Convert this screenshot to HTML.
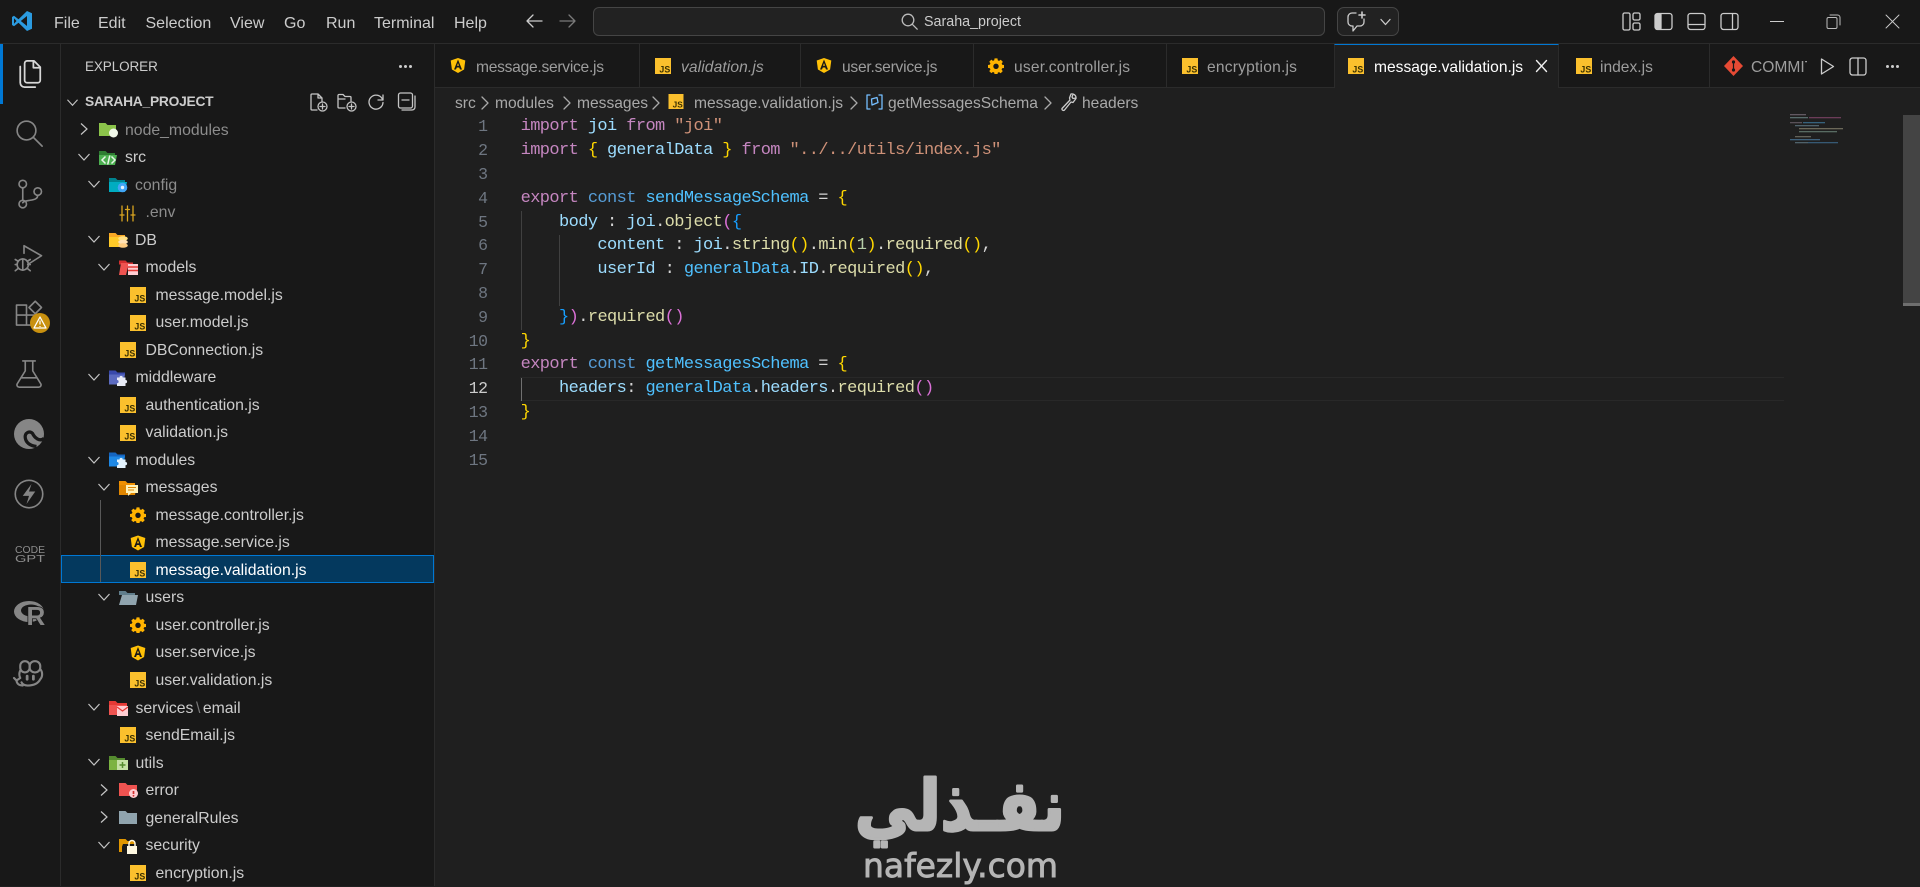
<!DOCTYPE html>
<html lang="en"><head><meta charset="utf-8"><title>Saraha_project</title>
<style>
*{box-sizing:border-box}
html,body{margin:0;padding:0;width:1920px;height:886px;overflow:hidden;background:#1f1f1f;font-family:"Liberation Sans",sans-serif;color:#ccc}
.a{position:absolute}
.t{position:absolute;white-space:pre;line-height:20px}
svg{position:absolute;overflow:visible}
.s{fill:none;stroke:currentColor;stroke-width:1.3;stroke-linecap:round;stroke-linejoin:round}
#title{left:0;top:0;width:1920px;height:44px;background:#181818;border-bottom:1px solid #2b2b2b}
.m{top:13.500px;font-size:16px;color:#ccc}
#act{left:0;top:44px;width:61px;height:842px;background:#181818;border-right:1px solid #2b2b2b}
.ai{color:#868686;left:14px;width:30px;height:30px}
#side{left:61px;top:44px;width:374px;height:842px;background:#181818;border-right:1px solid #2b2b2b}
#tabs{left:435px;top:44px;width:1485px;height:44px;background:#181818;border-bottom:1px solid #2b2b2b}
.sep{top:44px;width:1px;height:43px;background:#2b2b2b}
.tb{top:57.500px;font-size:15.6px;color:#9d9d9d}
.bc{top:93.500px;font-size:15.6px;color:#a9a9a9}
.ch{color:#a9a9a9}
.r{position:absolute;left:0;width:434px;height:27.52px;font-size:15.8px;color:#ccc}
.r span{position:absolute;top:4.6px;line-height:20px;white-space:pre}
.r svg{top:6px}
.r svg[width="12"]{top:7.3px}
.d{color:#8c8c8c}
#code{left:520.6px;top:115.4px;font:17px/23.8px "Liberation Mono",monospace;letter-spacing:-.6px;white-space:pre;color:#d4d4d4}
#nums{left:440px;top:115.4px;width:47.5px;text-align:right;white-space:pre;font:16.5px/23.8px "Liberation Mono",monospace;letter-spacing:-.5px;color:#6e7681}
.k{color:#c586c0}.v{color:#9cdcfe}.st{color:#ce9178}.c{color:#569cd6}.n{color:#4fc1ff}.f{color:#dcdcaa}.g{color:#ffd700}.o{color:#da70d6}.b{color:#179fff}.u{color:#b5cea8}
</style></head><body>
<svg width="0" height="0" style="position:absolute">
<defs>
<symbol id="js" viewBox="0 0 16 16"><rect width="16" height="16" fill="#fbc02d"/><text x="15.2" y="14.4" text-anchor="end" font-family="Liberation Sans" font-weight="700" font-size="8.800" fill="#3b3000">JS</text></symbol>
<symbol id="ng" viewBox="0 0 16 16"><path d="M8 0.5 15.3 3l-1.2 9L8 15.5 1.9 12 .7 3z" fill="#ffc107"/><path d="M8 2 4 12h2l.8-2h2.4l.8 2h2z" fill="#181818"/><path d="M8 5.6 9 8.3H7z" fill="#ffc107"/><path d="M5 12.2 8 14l3-1.8z" fill="#ffc107"/></symbol>
<symbol id="gear" viewBox="0 0 16 16"><path d="M6.400 0h3.200l.4 2.200 1.400.6 1.900-1.300 2.300 2.300-1.300 1.800.6 1.400 2.100.4v3.200l-2.200.4-.6 1.400 1.300 1.800-2.300 2.300-1.800-1.300-1.400.6-.4 2.100H6.400l-.4-2.200-1.400-.6-1.800 1.300L.5 14.100l1.300-1.800-.6-1.400L-1 10.500V7.300l2.200-.4.600-1.400L.5 3.700 2.800 1.400l1.800 1.300 1.400-.6z" transform="translate(.8 .4) scale(.9)" fill="#ffb300"/><circle cx="8" cy="8.300" r="2.700" fill="#181818"/></symbol>
<symbol id="chevd" viewBox="0 0 12 12"><path d="M.5 3 6 9l5.500-6" fill="none" stroke="#c5c5c5" stroke-width="1.200"/></symbol>
<symbol id="chevr" viewBox="0 0 12 12"><path d="M3 .5 9 6l-6 5.500" fill="none" stroke="#c5c5c5" stroke-width="1.200"/></symbol>
<symbol id="f-node" viewBox="0 0 19 16"><path d="M0 1h6.500l2 2H17v11H0z" fill="#8bc34a"/><circle cx="14.500" cy="11" r="4.500" fill="#f1f8e9"/></symbol>
<symbol id="f-src" viewBox="0 0 19 16"><path d="M0 1h6.500l2 2H16v2H0z" fill="#2e7d32"/><path d="M0 5h18l-2 10H0z" fill="#4caf50"/><path d="M6.500 6.500 3 10l3.500 3.500M12.500 6.500 16 10l-3.500 3.500M10.800 5.500 8.700 14.500" fill="none" stroke="#e8f5e9" stroke-width="1.500"/></symbol>
<symbol id="f-config" viewBox="0 0 19 16"><path d="M0 1h6.500l2 2H16v2H0z" fill="#00838f"/><path d="M0 5h18l-2 10H0z" fill="#00acc1"/><circle cx="13.500" cy="10.500" r="4.800" fill="#42a5f5"/><circle cx="13.500" cy="10.500" r="1.700" fill="#e3f2fd"/></symbol>
<symbol id="f-db" viewBox="0 0 19 16"><path d="M0 1h6.500l2 2H16v2H0z" fill="#f9a825"/><path d="M0 5h18l-2 10H0z" fill="#ffca28"/><ellipse cx="14" cy="6.500" rx="4.800" ry="2.300" fill="#ffe082"/><ellipse cx="14" cy="10" rx="4.800" ry="2.300" fill="#ffe0b2"/><ellipse cx="14" cy="13.500" rx="4.800" ry="2.300" fill="#ffcc80"/></symbol>
<symbol id="f-models" viewBox="0 0 19 16"><path d="M0 .5h6.500l2 2H14v2H0z" fill="#d32f2f"/><path d="M2 3h8L7 15H0z" fill="#ef5350"/><rect x="9" y="4" width="10" height="11" fill="#ffcdd2"/><path d="M9 7h10M9 10.500h10" stroke="#e53935" stroke-width="1.400"/></symbol>
<symbol id="f-mid" viewBox="0 0 19 16"><path d="M0 .5h6.500l2 2H16v2H0z" fill="#3949ab"/><path d="M0 4.500h16l-2 10H0z" fill="#5c6bc0"/><path d="M8 7.500h2.500a1.600 1.600 0 0 1 3.200 0H16.500V10a1.600 1.600 0 0 1 0 3.200V16H8v-2.800a1.600 1.600 0 0 0 0-3.200z" fill="#e8eaf6"/></symbol>
<symbol id="f-mod" viewBox="0 0 19 16"><path d="M0 .5h6.500l2 2H16v2H0z" fill="#1565c0"/><path d="M0 4.500h16l-2 10H0z" fill="#1e88e5"/><path d="M8 7.500h2.500a1.600 1.600 0 0 1 3.200 0H16.500V10a1.600 1.600 0 0 1 0 3.200V16H8v-2.800a1.600 1.600 0 0 0 0-3.200z" fill="#e3f2fd"/></symbol>
<symbol id="f-msg" viewBox="0 0 19 16"><path d="M0 1h6.500l2 2H16v2H0z" fill="#ef8f00"/><path d="M0 5h18l-2 10H0z" fill="#e08600"/><path d="M7 5h12v8h-7l-3 3v-3H7z" fill="#fff2b8"/><path d="M9 7.500h8M9 10h6" stroke="#e08600"/></symbol>
<symbol id="f-users" viewBox="0 0 19 16"><path d="M0 1h6.500l2 2H16v2H0z" fill="#607d8b"/><path d="M3 5h16l-2 10H0z" fill="#90a4ae"/></symbol>
<symbol id="f-mail" viewBox="0 0 19 16"><path d="M0 1h6.500l2 2H18v2H0z" fill="#e53935"/><path d="M0 5h18v10H0z" fill="#ef5350"/><rect x="8" y="6" width="11" height="10" fill="#ffcdd2"/><path d="M8 7 13.500 11 19 7" fill="none" stroke="#e53935" stroke-width="1.200"/></symbol>
<symbol id="f-utils" viewBox="0 0 19 16"><path d="M0 1h6.500l2 2H16v2H0z" fill="#558b2f"/><path d="M0 5h18l-2 10H0z" fill="#7cb342"/><rect x="8" y="5" width="11" height="10" fill="#c5e1a5"/><path d="M13.500 7v6M10.500 10h6" stroke="#558b2f" stroke-width="1.500"/></symbol>
<symbol id="f-err" viewBox="0 0 19 16"><path d="M0 1h6.500l2 2H18v11H0z" fill="#ef5350"/><circle cx="14.500" cy="11.500" r="4.500" fill="#ffcdd2"/><path d="M14.500 9v3" stroke="#d32f2f" stroke-width="1.700"/><circle cx="14.500" cy="13.800" r=".9" fill="#d32f2f"/></symbol>
<symbol id="f-gen" viewBox="0 0 19 16"><path d="M0 1h6.500l2 2H18v11H0z" fill="#90a4ae"/></symbol>
<symbol id="f-sec" viewBox="0 0 19 16"><path d="M0 1h6.500l2 2H16v11H0z" fill="#e09600"/><path d="M4 6h13l-2 8H1z" fill="#181818"/><path d="M0 4h3v10H0z" fill="#e09600"/><rect x="8" y="8" width="10" height="8" fill="#fff8e1"/><path d="M10 8V5.500a3 3 0 0 1 6 0V8" fill="none" stroke="#fff8e1" stroke-width="1.500"/></symbol>
</defs></svg>

<div id="title" class="a"></div>
<svg style="left:11px;top:10px" width="22" height="22" viewBox="0 0 22 22"><path d="M16 1 7.500 9.200 3 5.800 1 7v8l2 1.200 4.500-3.400L16 21l5-2.200V3.200z" fill="#2b9be0"/><path d="M16 6 9.800 11 16 16z" fill="#181818"/><path d="M3 8.200 5.500 11 3 13.800z" fill="#181818"/></svg>
<div class="t m" style="left:54px">File</div><div class="t m" style="left:98px">Edit</div><div class="t m" style="left:145.500px">Selection</div><div class="t m" style="left:230px">View</div><div class="t m" style="left:284px">Go</div><div class="t m" style="left:326px">Run</div><div class="t m" style="left:374px">Terminal</div><div class="t m" style="left:454px">Help</div>
<svg class="s" style="left:525px;top:13px;color:#ccc" width="18" height="16" viewBox="0 0 18 16"><path d="M17 8H2M8 2 2 8l6 6"/></svg>
<svg class="s" style="left:559px;top:13px;color:#7a7a7a" width="18" height="16" viewBox="0 0 18 16"><path d="M1 8h15M10 2l6 6-6 6"/></svg>
<div class="a" style="left:593px;top:7px;width:732px;height:29px;background:#222;border:1px solid #454545;border-radius:6px"></div>
<svg class="s" style="left:901px;top:13px;color:#bbb" width="17" height="17" viewBox="0 0 17 17"><circle cx="7" cy="7" r="5.800"/><path d="m11.200 11.200 5 5"/></svg>
<div class="t" style="left:924px;top:12px;font-size:14.300px;color:#ccc">Saraha_project</div>
<div class="a" style="left:1337px;top:7px;width:62px;height:29px;background:#222;border:1px solid #454545;border-radius:7px"></div>
<svg class="s" style="left:1346px;top:10px;color:#ccc" width="22" height="23" viewBox="0 0 22 23"><path d="M10 3H6a4 4 0 0 0-4 4v5a4 4 0 0 0 4 4h1v5l4-5h3a4 4 0 0 0 4-4V9"/><path d="M16 2v6M13 5h6" stroke-width="1.600"/></svg>
<svg class="s" style="left:1380px;top:18px;color:#ccc" width="11" height="8" viewBox="0 0 11 8"><path d="M1 1.500 5.500 6.500 10 1.500"/></svg>
<svg class="s" style="left:1622px;top:12px;color:#ccc" width="19" height="19" viewBox="0 0 19 19"><rect x="1" y="1" width="7" height="17" rx="1.500"/><rect x="11" y="1" width="7" height="7" rx="1.500"/><rect x="11" y="11" width="7" height="7" rx="1.500"/></svg>
<svg class="s" style="left:1654px;top:12px;color:#ccc" width="19" height="19" viewBox="0 0 19 19"><rect x="1" y="1.500" width="17" height="16" rx="2.500"/><path d="M2 2.500h5v14H2z" fill="#ccc"/></svg>
<svg class="s" style="left:1687px;top:12px;color:#ccc" width="19" height="19" viewBox="0 0 19 19"><rect x="1" y="1.500" width="17" height="16" rx="2.500"/><path d="M1.500 12.500h16"/></svg>
<svg class="s" style="left:1720px;top:12px;color:#ccc" width="19" height="19" viewBox="0 0 19 19"><rect x="1" y="1.500" width="17" height="16" rx="2.500"/><path d="M12.500 2v15"/></svg>
<div class="a" style="left:1770px;top:20.500px;width:14px;height:1px;background:#ccc"></div>
<svg class="s" style="left:1826px;top:14px;color:#bbb;stroke-width:1" width="15" height="15" viewBox="0 0 15 15"><rect x="1" y="3.500" width="10" height="11" rx="1.500"/><path d="M4 1h7.500a2.500 2.500 0 0 1 2.500 2.500V11"/></svg>
<svg class="s" style="left:1885px;top:14px;color:#ccc;stroke-width:.9" width="15" height="15" viewBox="0 0 15 15"><path d="m1 1 13 13M14 1 1 14"/></svg>

<div id="act" class="a"></div>
<div class="a" style="left:0;top:44px;width:2.500px;height:60px;background:#0078d4"></div>
<svg class="s ai" style="top:59px;color:#d7d7d7;stroke-width:1.400" viewBox="0 0 24 24"><path d="M10.500 1.500H16l5 5V17a2 2 0 0 1-2 2h-8.500a2 2 0 0 1-2-2V3.500a2 2 0 0 1 2-2zM15.500 1.500v5.500H21M5 6v13a3.500 3.500 0 0 0 3.500 3.500H17"/></svg>
<svg class="s ai" style="top:118px" viewBox="0 0 24 24"><circle cx="10" cy="10" r="7.500"/><path d="m15.500 15.500 7 7"/></svg>
<svg class="s ai" style="top:179px" viewBox="0 0 24 24"><circle cx="7" cy="4" r="3"/><circle cx="7" cy="20" r="3"/><circle cx="19" cy="10" r="3"/><path d="M7 7v10M19 13c0 3-3 3.500-6 4s-5 .5-6 2"/></svg>
<svg class="s ai" style="top:242px" viewBox="0 0 24 24"><path d="M8 3 22 11 11 18M8 3v6"/><circle cx="7" cy="18" r="4.500"/><path d="M7 13.500v9M1 14l2.500 1.500M1 18h1.500M1 23l2.500-2M13 14l-2.500 1.500M13 18h-1.500M13 23l-2.500-2"/></svg>
<svg class="s ai" style="top:300px" viewBox="0 0 24 24"><path d="M2 4h8v8h8v8H2zM2 12h8v8"/><path d="m17 1 5 5-5 5-5-5z"/></svg>
<div class="a" style="left:30px;top:313px;width:20px;height:20px;border-radius:50%;background:#c8900f"></div>
<svg style="left:33px;top:316px" width="14" height="13" viewBox="0 0 14 13"><path d="M7 1 13 12H1z" fill="none" stroke="#fff" stroke-width="1.300" stroke-linejoin="round"/><path d="M7 4.500V8.500M7 10v1" stroke="#fff" stroke-width="1.200"/></svg>
<svg class="s ai" style="top:359px" viewBox="0 0 24 24"><path d="M7 1.500h10M9 1.500v8L2.500 20a1.800 1.800 0 0 0 1.500 2.500h16a1.800 1.800 0 0 0 1.500-2.500L15 9.500v-8M6 15h12"/></svg>
<svg style="left:14px;top:419px" width="30" height="30" viewBox="0 0 24 24"><circle cx="12" cy="12" r="12" fill="#868686"/><path d="M24 15.500C20.500 18.500 16.500 15 14.800 11.500 12.500 9 8.500 11 9 15c.5 3.800 3.800 6.500 9 7" fill="none" stroke="#181818" stroke-width="2.600"/></svg>
<svg class="s ai" style="top:479px" viewBox="0 0 24 24"><circle cx="12" cy="12" r="11"/><path d="M14 4 7 13.500h5L10 20l7-10h-5z" fill="#868686" stroke="none"/></svg>
<svg style="left:15px;top:545px" width="30" height="18" viewBox="0 0 30 18"><text x="0" y="8" font-family="Liberation Sans" font-size="10.500" fill="#8c8c8c" textLength="30" lengthAdjust="spacingAndGlyphs">CODE</text><text x="0" y="17" font-family="Liberation Sans" font-size="10.500" fill="#8c8c8c" textLength="30" lengthAdjust="spacingAndGlyphs">GPT</text></svg>
<svg style="left:14px;top:598px" width="30" height="30" viewBox="0 0 30 30"><ellipse cx="15" cy="13.500" rx="15" ry="10.500" fill="#868686"/><ellipse cx="17" cy="12.500" rx="10" ry="6" fill="#181818"/><text x="12.500" y="27" font-family="Liberation Sans" font-weight="700" font-size="26" fill="#868686" stroke="#181818" stroke-width="1.500" paint-order="stroke">R</text></svg>
<svg class="s ai" style="top:658px;stroke-width:1.700" viewBox="0 0 24 24"><rect x="5" y="2.500" width="7.500" height="9" rx="3.700"/><rect x="12.500" y="2.500" width="8.500" height="9" rx="4"/><path d="M5 10c-1 2-1 4 0 6M21 9c2 2 2 6 0 8-1.500 3-5 5-10 5-2 0-4-.5-5-2.500M7 22c-3 0-5-1.500-5-4.500M0 16l2 2 3-2"/><path d="M10.500 14.500v2.500M15.500 14.500v2.500" stroke-width="2.200"/></svg>

<div id="side" class="a"></div>
<div class="t" style="left:85px;top:56.500px;font-size:13.500px;color:#ccc;letter-spacing:-.1px">EXPLORER</div>
<div class="a" style="left:399px;top:65px;width:3px;height:3px;background:#ccc;box-shadow:5px 0 #ccc,10px 0 #ccc;border-radius:50%"></div>
<svg style="left:67px;top:97px" width="11" height="11"><use href="#chevd"/></svg>
<div class="t" style="left:85px;top:92px;font-size:13.800px;font-weight:700;color:#ccc;letter-spacing:-.25px">SARAHA_PROJECT</div>
<svg class="s" style="left:309px;top:93px;color:#c5c5c5" width="19" height="19" viewBox="0 0 19 19"><path d="M8 17H3a1 1 0 0 1-1-1V2a1 1 0 0 1 1-1h6l4 4v4M9 1v4h4"/><circle cx="13.500" cy="13.500" r="4.500"/><path d="M13.500 11v5M11 13.500h5"/></svg>
<svg class="s" style="left:337px;top:93px;color:#c5c5c5" width="20" height="19" viewBox="0 0 20 19"><path d="M8 15H2a1 1 0 0 1-1-1V2.500a1 1 0 0 1 1-1h4l2 2h5a1 1 0 0 1 1 1V8M1 6h7"/><circle cx="14.500" cy="13.500" r="4.500"/><path d="M14.500 11v5M12 13.500h5"/></svg>
<svg class="s" style="left:367px;top:93px;color:#c5c5c5" width="18" height="18" viewBox="0 0 18 18"><path d="M15.500 6.500A7 7 0 1 0 16 9.500M16 2v5h-5"/></svg>
<svg class="s" style="left:397px;top:92px;color:#c5c5c5" width="19" height="19" viewBox="0 0 19 19"><rect x="1.500" y="1" width="14" height="15" rx="2"/><path d="M5 8h7M18 4v11a3 3 0 0 1-3 3H5"/></svg>

<div class="a" style="left:61px;top:555px;width:373px;height:27.500px;background:#04395e;border:1px solid #0078d4"></div>
<div class="a" style="left:100px;top:500px;width:1px;height:82px;background:#585858"></div>

<div class="a" style="left:0;top:116px;width:434px">
<div class="r d" style="top:0"><svg style="left:78px" width="12" height="12"><use href="#chevr"/></svg><svg style="left:99px" width="19" height="16"><use href="#f-node"/></svg><span style="left:125px">node_modules</span></div>
<div class="r" style="top:27.520px"><svg style="left:78px" width="12" height="12"><use href="#chevd"/></svg><svg style="left:99px" width="19" height="16"><use href="#f-src"/></svg><span style="left:125px">src</span></div>
<div class="r d" style="top:55.040px"><svg style="left:88px" width="12" height="12"><use href="#chevd"/></svg><svg style="left:109px" width="19" height="16"><use href="#f-config"/></svg><span style="left:135px">config</span></div>
<div class="r d" style="top:82.560px"><svg class="s" style="left:119px;color:#d9a520" width="17" height="17" viewBox="0 0 17 17"><path d="M3 1v15M8.500 1v15M14 1v15M1 10h4M6.500 4.500h4M12 10h4"/></svg><span style="left:145.500px">.env</span></div>
<div class="r" style="top:110.080px"><svg style="left:88px" width="12" height="12"><use href="#chevd"/></svg><svg style="left:109px" width="19" height="16"><use href="#f-db"/></svg><span style="left:135px">DB</span></div>
<div class="r" style="top:137.600px"><svg style="left:98px" width="12" height="12"><use href="#chevd"/></svg><svg style="left:119px" width="19" height="16"><use href="#f-models"/></svg><span style="left:145.500px">models</span></div>
<div class="r" style="top:165.120px"><svg style="left:130px" width="16" height="16"><use href="#js"/></svg><span style="left:155.500px">message.model.js</span></div>
<div class="r" style="top:192.640px"><svg style="left:130px" width="16" height="16"><use href="#js"/></svg><span style="left:155.500px">user.model.js</span></div>
<div class="r" style="top:220.160px"><svg style="left:120px" width="16" height="16"><use href="#js"/></svg><span style="left:145.500px">DBConnection.js</span></div>
<div class="r" style="top:247.680px"><svg style="left:88px" width="12" height="12"><use href="#chevd"/></svg><svg style="left:109px" width="19" height="16"><use href="#f-mid"/></svg><span style="left:135.500px">middleware</span></div>
<div class="r" style="top:275.200px"><svg style="left:120px" width="16" height="16"><use href="#js"/></svg><span style="left:145.500px">authentication.js</span></div>
<div class="r" style="top:302.720px"><svg style="left:120px" width="16" height="16"><use href="#js"/></svg><span style="left:145.500px">validation.js</span></div>
<div class="r" style="top:330.240px"><svg style="left:88px" width="12" height="12"><use href="#chevd"/></svg><svg style="left:109px" width="19" height="16"><use href="#f-mod"/></svg><span style="left:135.500px">modules</span></div>
<div class="r" style="top:357.760px"><svg style="left:98px" width="12" height="12"><use href="#chevd"/></svg><svg style="left:119px" width="19" height="16"><use href="#f-msg"/></svg><span style="left:145.500px">messages</span></div>
<div class="r" style="top:385.280px"><svg style="left:130px" width="16" height="16"><use href="#gear"/></svg><span style="left:155.500px">message.controller.js</span></div>
<div class="r" style="top:412.800px"><svg style="left:130px" width="16" height="16"><use href="#ng"/></svg><span style="left:155.500px">message.service.js</span></div>
<div class="r" style="top:440.320px;color:#fff"><svg style="left:130px" width="16" height="16"><use href="#js"/></svg><span style="left:155.500px">message.validation.js</span></div>
<div class="r" style="top:467.840px"><svg style="left:98px" width="12" height="12"><use href="#chevd"/></svg><svg style="left:119px" width="19" height="16"><use href="#f-users"/></svg><span style="left:145.500px">users</span></div>
<div class="r" style="top:495.360px"><svg style="left:130px" width="16" height="16"><use href="#gear"/></svg><span style="left:155.500px">user.controller.js</span></div>
<div class="r" style="top:522.880px"><svg style="left:130px" width="16" height="16"><use href="#ng"/></svg><span style="left:155.500px">user.service.js</span></div>
<div class="r" style="top:550.400px"><svg style="left:130px" width="16" height="16"><use href="#js"/></svg><span style="left:155.500px">user.validation.js</span></div>
<div class="r" style="top:577.920px"><svg style="left:88px" width="12" height="12"><use href="#chevd"/></svg><svg style="left:109px" width="19" height="16"><use href="#f-mail"/></svg><span style="left:135.500px">services<i style="font-style:normal;color:#777;padding:0 2.500px">\</i>email</span></div>
<div class="r" style="top:605.440px"><svg style="left:120px" width="16" height="16"><use href="#js"/></svg><span style="left:145.500px">sendEmail.js</span></div>
<div class="r" style="top:632.960px"><svg style="left:88px" width="12" height="12"><use href="#chevd"/></svg><svg style="left:109px" width="19" height="16"><use href="#f-utils"/></svg><span style="left:135.500px">utils</span></div>
<div class="r" style="top:660.480px"><svg style="left:98px" width="12" height="12"><use href="#chevr"/></svg><svg style="left:119px" width="19" height="16"><use href="#f-err"/></svg><span style="left:145.500px">error</span></div>
<div class="r" style="top:688px"><svg style="left:98px" width="12" height="12"><use href="#chevr"/></svg><svg style="left:119px" width="19" height="16"><use href="#f-gen"/></svg><span style="left:145.500px">generalRules</span></div>
<div class="r" style="top:715.520px"><svg style="left:98px" width="12" height="12"><use href="#chevd"/></svg><svg style="left:119px" width="19" height="16"><use href="#f-sec"/></svg><span style="left:145.500px">security</span></div>
<div class="r" style="top:743.040px"><svg style="left:130px" width="16" height="16"><use href="#js"/></svg><span style="left:155.500px">encryption.js</span></div>
</div>

<div id="tabs" class="a"></div>
<div class="a sep" style="left:639px"></div><div class="a sep" style="left:800px"></div><div class="a sep" style="left:973px"></div><div class="a sep" style="left:1166px"></div><div class="a sep" style="left:1709px"></div>
<div class="a" style="left:1334px;top:44px;width:225px;height:44px;background:#1f1f1f;border-top:1.500px solid #0078d4;border-left:1px solid #2b2b2b;border-right:1px solid #2b2b2b"></div>
<svg style="left:450px;top:57px" width="16" height="17"><use href="#ng"/></svg><div class="t tb" style="left:476px;letter-spacing:-.27px">message.service.js</div>
<svg style="left:655px;top:58px" width="16" height="16"><use href="#js"/></svg><div class="t tb" style="left:681px;font-style:italic;letter-spacing:.1px">validation.js</div>
<svg style="left:816px;top:57px" width="16" height="17"><use href="#ng"/></svg><div class="t tb" style="left:842px;letter-spacing:-.24px">user.service.js</div>
<svg style="left:988px;top:58px" width="16" height="16"><use href="#gear"/></svg><div class="t tb" style="left:1014px;letter-spacing:.2px">user.controller.js</div>
<svg style="left:1182px;top:58px" width="16" height="16"><use href="#js"/></svg><div class="t tb" style="left:1207px;letter-spacing:.2px">encryption.js</div>
<svg style="left:1348px;top:58px" width="16" height="16"><use href="#js"/></svg><div class="t tb" style="left:1374px;color:#fff">message.validation.js</div>
<svg class="s" style="left:1536px;top:60px;color:#eee;stroke-width:1.400" width="11" height="12" viewBox="0 0 11 12"><path d="m.5.5 10 11M10.500.5l-10 11"/></svg>
<svg style="left:1576px;top:58px" width="16" height="16"><use href="#js"/></svg><div class="t tb" style="left:1600px">index.js</div>
<svg style="left:1724px;top:56px" width="19" height="20" viewBox="0 0 19 20"><path d="M9.500 0 19 10 9.500 20 0 10z" fill="#e64a34"/><circle cx="9.500" cy="6" r="1.600" fill="#181818"/><circle cx="9.500" cy="14" r="1.600" fill="#181818"/><path d="M9.500 6v8" stroke="#181818" stroke-width="1.200"/></svg>
<div class="a" style="left:1751px;top:57.500px;width:56px;height:22px;overflow:hidden"><div class="t tb" style="left:0;top:0">COMMIT_EDITMSG</div></div>
<svg class="s" style="left:1820px;top:58px;color:#ccc" width="15" height="17" viewBox="0 0 15 17"><path d="M1.500 1 13.500 8.500 1.500 16z"/></svg>
<svg class="s" style="left:1849px;top:57px;color:#ccc" width="18" height="19" viewBox="0 0 18 19"><rect x="1" y="1" width="16" height="17" rx="2.500"/><path d="M9 1v17"/></svg>
<div class="a" style="left:1886px;top:65px;width:3px;height:3px;background:#ccc;box-shadow:5px 0 #ccc,10px 0 #ccc;border-radius:50%"></div>

<div class="t bc" style="left:455px">src</div>
<svg class="s ch" style="left:481px;top:96px" width="8" height="14" viewBox="0 0 8 14"><path d="m1 1 6 6-6 6"/></svg>
<div class="t bc" style="left:495px">modules</div>
<svg class="s ch" style="left:563px;top:96px" width="8" height="14" viewBox="0 0 8 14"><path d="m1 1 6 6-6 6"/></svg>
<div class="t bc" style="left:577px">messages</div>
<svg class="s ch" style="left:652px;top:96px" width="8" height="14" viewBox="0 0 8 14"><path d="m1 1 6 6-6 6"/></svg>
<svg style="left:668px;top:94px" width="16" height="15"><use href="#js"/></svg>
<div class="t bc" style="left:694px">message.validation.js</div>
<svg class="s ch" style="left:850px;top:96px" width="8" height="14" viewBox="0 0 8 14"><path d="m1 1 6 6-6 6"/></svg>
<svg class="s" style="left:866px;top:94px;color:#75beff" width="17" height="16" viewBox="0 0 17 16"><path d="M4 1H1v14h3M13 1h3v14h-3"/><path d="M5.500 5 11 3.500 12 8.500 6 11z"/></svg>
<div class="t bc" style="left:888px">getMessagesSchema</div>
<svg class="s ch" style="left:1044px;top:96px" width="8" height="14" viewBox="0 0 8 14"><path d="m1 1 6 6-6 6"/></svg>
<svg class="s" style="left:1060px;top:93px;color:#ccc" width="17" height="18" viewBox="0 0 17 18"><path d="M11 1a4 4 0 0 1 5 4l-3 .5-1-1.500L13 1.500M11 1 9.500 5 10 7 2 15.500a1.500 1.500 0 0 0 2.500 1.500L11 9l2 .5 3-4"/></svg>
<div class="t bc" style="left:1082px">headers</div>

<div class="a" style="left:520px;top:376.600px;width:1264px;height:24px;border-top:1px solid #282828;border-bottom:1px solid #282828"></div>
<div class="a" style="left:520.500px;top:210.600px;width:1px;height:119px;background:#404040"></div>
<div class="a" style="left:520.500px;top:377.600px;width:1px;height:23.800px;background:#707070"></div>
<div class="a" style="left:558.800px;top:234.600px;width:1px;height:71px;background:#404040"></div>

<div id="nums" class="a">1
2
3
4
5
6
7
8
9
10
11
<span style="color:#ccc">12</span>
13
14
15</div>
<div id="code" class="a"><span class="k">import</span> <span class="v">joi</span> <span class="k">from</span> <span class="st">"joi"</span>
<span class="k">import</span> <span class="g">{</span> <span class="v">generalData</span> <span class="g">}</span> <span class="k">from</span> <span class="st">"../../utils/index.js"</span>

<span class="k">export</span> <span class="c">const</span> <span class="n">sendMessageSchema</span> = <span class="g">{</span>
    <span class="v">body</span> : <span class="v">joi</span>.<span class="f">object</span><span class="o">(</span><span class="b">{</span>
        <span class="v">content</span> : <span class="v">joi</span>.<span class="f">string</span><span class="g">()</span>.<span class="f">min</span><span class="g">(</span><span class="u">1</span><span class="g">)</span>.<span class="f">required</span><span class="g">()</span>,
        <span class="v">userId</span> : <span class="n">generalData</span>.<span class="v">ID</span>.<span class="f">required</span><span class="g">()</span>,

    <span class="b">}</span><span class="o">)</span>.<span class="f">required</span><span class="o">()</span>
<span class="g">}</span>
<span class="k">export</span> <span class="c">const</span> <span class="n">getMessagesSchema</span> = <span class="g">{</span>
    <span class="v">headers</span>: <span class="n">generalData</span>.<span class="v">headers</span>.<span class="f">required</span><span class="o">()</span>
<span class="g">}</span></div>

<svg style="left:1790px;top:113px" width="54" height="32" viewBox="0 0 54 32">
<g opacity=".55"><rect x="0" y="1" width="16" height="1.300" fill="#9a8a9a"/><rect x="0" y="4" width="18" height="1.300" fill="#8aa"/><rect x="19" y="4" width="32" height="1.300" fill="#a58"/>
<rect x="0" y="9" width="12" height="1.300" fill="#8a7a8a"/><rect x="13" y="9" width="22" height="1.300" fill="#4a9acb"/>
<rect x="5" y="12" width="24" height="1.300" fill="#79a"/><rect x="9" y="15" width="44" height="1.300" fill="#a9a58a"/><rect x="9" y="18" width="38" height="1.300" fill="#8a9"/>
<rect x="5" y="23" width="16" height="1.300" fill="#9a9a8a"/><rect x="0" y="26" width="30" height="1.300" fill="#5a9aca"/><rect x="5" y="29" width="13" height="1.300" fill="#79a"/><rect x="18" y="29" width="30" height="1.300" fill="#4a8aba"/></g></svg>

<div class="a" style="left:1903px;top:115px;width:17px;height:188px;background:#444"></div>
<div class="a" style="left:1903px;top:303px;width:17px;height:3px;background:#6e6e6e"></div>

<svg style="left:850px;top:770px" width="220" height="116" viewBox="0 0 220 116">
<text x="5" y="60" direction="ltr" font-family="DejaVu Sans" font-weight="700" font-size="70" fill="#b5b5b5" stroke="#b5b5b5" stroke-width="3" stroke-linejoin="round" textLength="210" lengthAdjust="spacingAndGlyphs">&#x0646;&#x0641;&#x0640;&#x0630;&#x0644;&#x064A;</text>
<text x="13" y="107" font-family="DejaVu Sans" font-size="33" fill="#b5b5b5" stroke="#b5b5b5" stroke-width=".9" textLength="195" lengthAdjust="spacingAndGlyphs">nafezly.com</text>
</svg>
</body></html>
